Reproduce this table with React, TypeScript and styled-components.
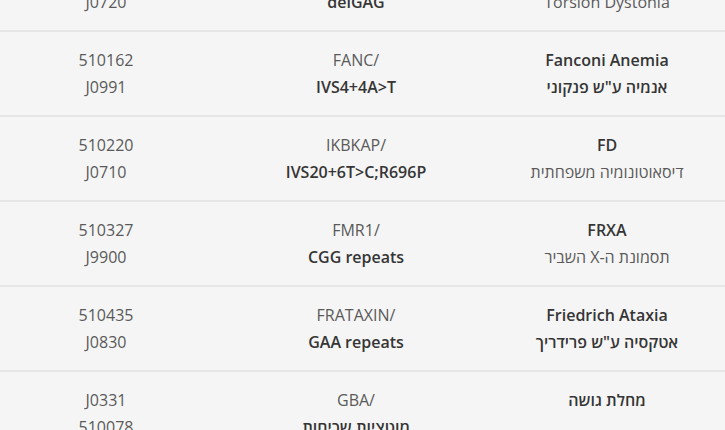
import React from "react";
import styled, { createGlobalStyle } from "styled-components";

const GlobalStyle = createGlobalStyle`
  html, body {
    margin: 0;
    background: #f5f5f5;
  }
  body {
    font-family: "Open Sans", "DejaVu Sans", sans-serif;
  }
`;

const Viewport = styled.div`
  width: 725px;
  height: 430px;
  overflow: hidden;
  background: #f5f5f5;
`;

const Table = styled.div`
  margin-top: -55px;
  display: flex;
  flex-direction: column;
`;

const Row = styled.div`
  box-sizing: border-box;
  height: 85px;
  border-top: 2px solid #e6e6e6;
  display: grid;
  grid-template-columns: 212px 288px 214px;
  align-items: center;
`;

const Cell = styled.div<{ $rtl?: boolean }>`
  display: flex;
  flex-direction: column;
  align-items: center;
  text-align: center;
  direction: ${(p) => (p.$rtl ? "rtl" : "ltr")};
`;

const Line = styled.span<{ $bold?: boolean }>`
  display: block;
  font-size: 16px;
  line-height: 27px;
  height: 27px;
  white-space: nowrap;
  font-weight: ${(p) => (p.$bold ? 600 : 400)};
  color: ${(p) => (p.$bold ? "#353535" : "#5a5a5a")};
`;

type L = { t: string; b?: boolean };
type R = { code: L[]; gene: L[]; name: L[] };

const rows: R[] = [
  {
    code: [{ t: "510069" }, { t: "J0720" }],
    gene: [{ t: "DYT1/" }, { t: "delGAG", b: true }],
    name: [{ t: "דיסטוניה", b: true }, { t: "Torsion Dystonia" }],
  },
  {
    code: [{ t: "510162" }, { t: "J0991" }],
    gene: [{ t: "FANC/" }, { t: "IVS4+4A>T", b: true }],
    name: [
      { t: "Fanconi Anemia", b: true },
      { t: "אנמיה ע\"ש פנקוני", b: true },
    ],
  },
  {
    code: [{ t: "510220" }, { t: "J0710" }],
    gene: [{ t: "IKBKAP/" }, { t: "IVS20+6T>C;R696P", b: true }],
    name: [{ t: "FD", b: true }, { t: "דיסאוטונומיה משפחתית" }],
  },
  {
    code: [{ t: "510327" }, { t: "J9900" }],
    gene: [{ t: "FMR1/" }, { t: "CGG repeats", b: true }],
    name: [{ t: "FRXA", b: true }, { t: "תסמונת ה-X השביר" }],
  },
  {
    code: [{ t: "510435" }, { t: "J0830" }],
    gene: [{ t: "FRATAXIN/" }, { t: "GAA repeats", b: true }],
    name: [
      { t: "Friedrich Ataxia", b: true },
      { t: "אטקסיה ע\"ש פרידריך", b: true },
    ],
  },
  {
    code: [{ t: "J0331" }, { t: "510078" }],
    gene: [{ t: "GBA/" }, { t: "מוטציות שכיחות", b: true }],
    name: [{ t: "מחלת גושה", b: true }, { t: "" }],
  },
];

const renderLines = (lines: L[]) =>
  lines.map((l, i) => (
    <Line key={i} $bold={l.b}>
      {l.t || "\u00a0"}
    </Line>
  ));

export default function App() {
  return (
    <>
      <GlobalStyle />
      <Viewport>
        <Table>
          {rows.map((r, i) => (
            <Row key={i}>
              <Cell>{renderLines(r.code)}</Cell>
              <Cell>{renderLines(r.gene)}</Cell>
              <Cell $rtl>{renderLines(r.name)}</Cell>
            </Row>
          ))}
        </Table>
      </Viewport>
    </>
  );
}
